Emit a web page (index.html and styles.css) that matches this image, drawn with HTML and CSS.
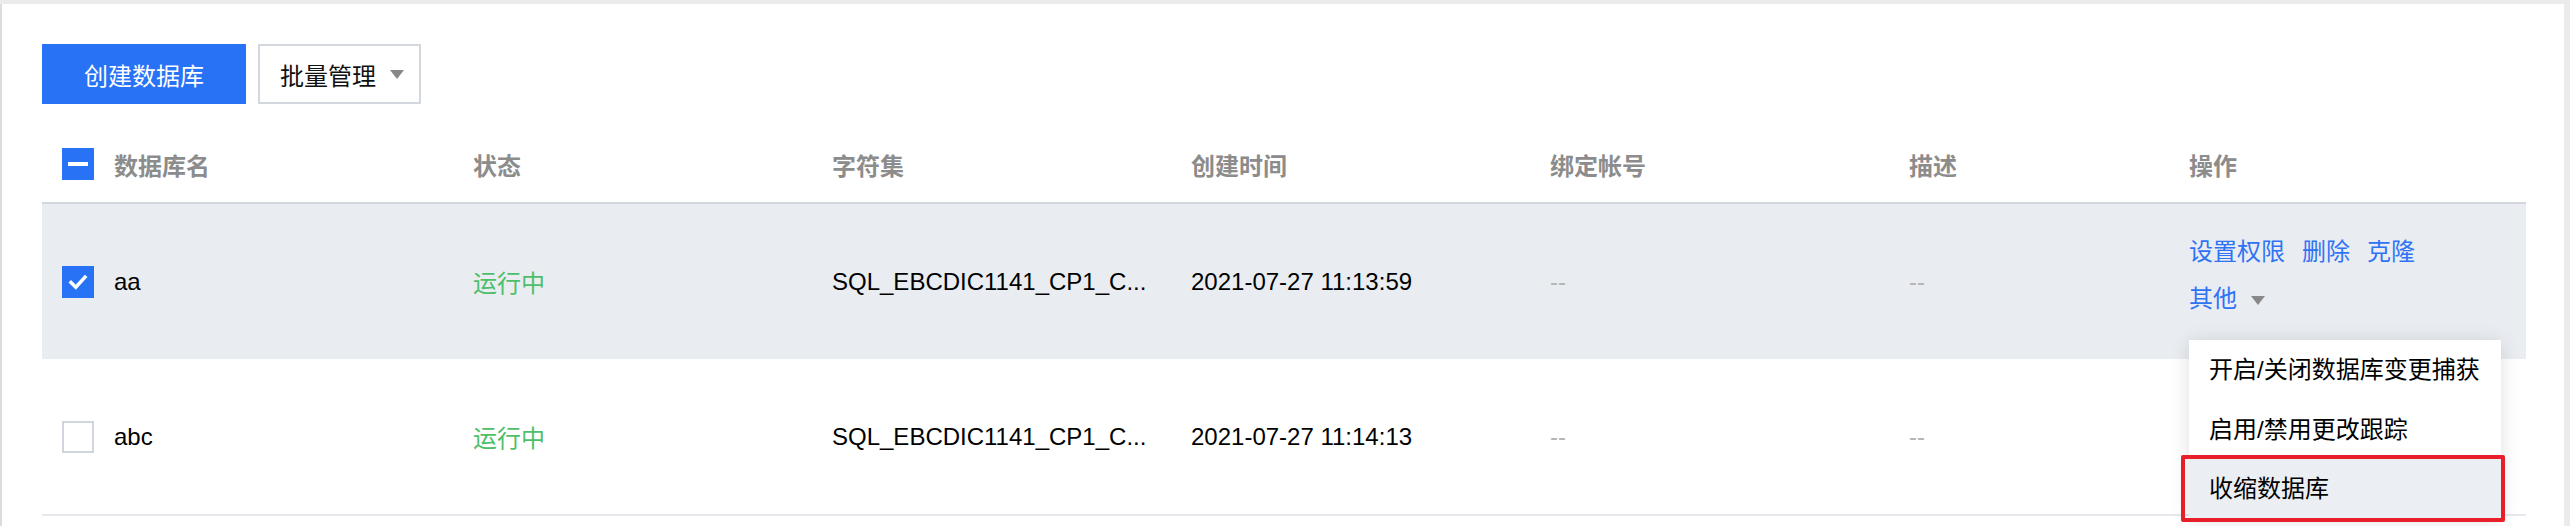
FILE: index.html
```html
<!DOCTYPE html>
<html lang="zh-CN">
<head>
<meta charset="utf-8">
<title>数据库管理</title>
<link rel="stylesheet" href="styles.css">
</head>
<body>
<div class="card">
  <div class="toolbar">
    <button class="btn btn-primary">创建数据库</button>
    <button class="btn btn-default">批量管理<span class="caret"></span></button>
  </div>
  <div class="table">
    <div class="tr thead">
      <div class="td"><span class="cb cb-on"><span class="dash"></span></span><span>数据库名</span></div>
      <div class="td">状态</div>
      <div class="td">字符集</div>
      <div class="td">创建时间</div>
      <div class="td">绑定帐号</div>
      <div class="td">描述</div>
      <div class="td">操作</div>
    </div>
    <div class="tr row row-hover">
      <div class="td"><span class="cb cb-on"><svg class="tick" viewBox="0 0 32 32"><path d="M8 16.5 L13.5 22 L24 10.5"/></svg></span><span>aa</span></div>
      <div class="td ok">运行中</div>
      <div class="td">SQL_EBCDIC1141_CP1_C...</div>
      <div class="td">2021-07-27 11:13:59</div>
      <div class="td empty">--</div>
      <div class="td empty">--</div>
      <div class="td ops">
        <div class="links"><a class="link">设置权限</a><a class="link">删除</a><a class="link">克隆</a></div>
        <div class="links"><a class="link">其他<span class="caret"></span></a></div>
        <div class="menu">
          <div class="menu-item">开启/关闭数据库变更捕获</div>
          <div class="menu-item">启用/禁用更改跟踪</div>
          <div class="menu-item menu-item-active">收缩数据库<span class="mark"></span></div>
        </div>
      </div>
    </div>
    <div class="tr row">
      <div class="td"><span class="cb"></span><span>abc</span></div>
      <div class="td ok">运行中</div>
      <div class="td">SQL_EBCDIC1141_CP1_C...</div>
      <div class="td">2021-07-27 11:14:13</div>
      <div class="td empty">--</div>
      <div class="td empty">--</div>
      <div class="td"></div>
    </div>
  </div>
</div>
</body>
</html>
```
FILE: styles.css
```css
html, body {
  margin: 0;
  padding: 0;
}
body {
  background: #ebebeb;
  font-family: "Liberation Sans", "Noto Sans CJK SC", sans-serif;
  font-size: 24px;
  color: #000;
  height: 526px;
  overflow: hidden;
}
.card {
  margin-top: 4px;
  width: 2564px;
  height: 522px;
  box-sizing: border-box;
  background: #fff;
  border-left: 2px solid #dadce1;
  padding: 40px 40px 0 40px;
}
.toolbar {
  display: flex;
  gap: 12px;
  height: 60px;
}
.btn {
  font-family: inherit;
  font-size: 24px;
  font-weight: 400;
  height: 60px;
  box-sizing: border-box;
  border-radius: 0;
  cursor: pointer;
  display: flex;
  align-items: center;
  justify-content: center;
}
.btn-primary {
  width: 204px;
  background: #2872f6;
  color: #fff;
  border: 0;
}
.btn-default {
  width: 163px;
  background: #fff;
  color: #111;
  border: 2px solid #d3d7de;
  justify-content: flex-start;
  padding: 0 0 0 20px;
}
.caret {
  display: inline-block;
  width: 0;
  height: 0;
  border-top: 9px solid #888;
  border-left: 7px solid transparent;
  border-right: 7px solid transparent;
  margin-left: 14px;
  vertical-align: middle;
}
.table {
  margin-top: 22px;
  width: 2484px;
}
.tr {
  display: grid;
  grid-template-columns: 411px 359px 359px 359px 359px 280px 1fr;
}
.thead {
  height: 76px;
  border-bottom: 2px solid #d2d6de;
  color: #8c8c8c;
  font-weight: 600;
}
.row {
  height: 155px;
  border-bottom: 2px solid #e5e8ed;
}
.row-hover {
  background: #e9ecf1;
  border-bottom: 0;
}
.td {
  padding-left: 20px;
  display: flex;
  align-items: center;
  white-space: nowrap;
}
.cb {
  width: 32px;
  height: 32px;
  box-sizing: border-box;
  border: 2px solid #d0d5de;
  background: #fff;
  margin-right: 20px;
  display: flex;
  align-items: center;
  justify-content: center;
  flex: none;
}
.cb-on {
  background: #2872f6;
  border-color: #2872f6;
}
.dash {
  width: 20px;
  height: 4px;
  background: #fff;
}
.tick {
  width: 32px;
  height: 32px;
  fill: none;
  stroke: #fff;
  stroke-width: 4;
  stroke-linecap: square;
}
.ok {
  color: #4dbf69;
}
.empty {
  color: #b5b5b5;
  font-size: 24px;
}
.ops {
  position: relative;
  flex-direction: column;
  align-items: flex-start;
  justify-content: flex-start;
  padding-top: 24px;
}
.links {
  display: flex;
  gap: 17px;
  line-height: 47px;
}
.link {
  color: #2f73f5;
  cursor: pointer;
}
.menu {
  position: absolute;
  top: 136px;
  left: 20px;
  width: 312px;
  background: #fff;
  box-shadow: 0 2px 18px rgba(0, 0, 0, 0.13);
  z-index: 5;
}
.menu-item {
  height: 59px;
  line-height: 59px;
  padding: 0 20px;
  color: #000;
  position: relative;
}
.menu-item:first-child {
  height: 60px;
  line-height: 60px;
}
.menu-item-active {
  background: #ebeef3;
}
.mark {
  position: absolute;
  left: -8px;
  right: -4px;
  top: -4px;
  bottom: -4px;
  border: 4px solid #e61f28;
  border-radius: 2px;
}
```
